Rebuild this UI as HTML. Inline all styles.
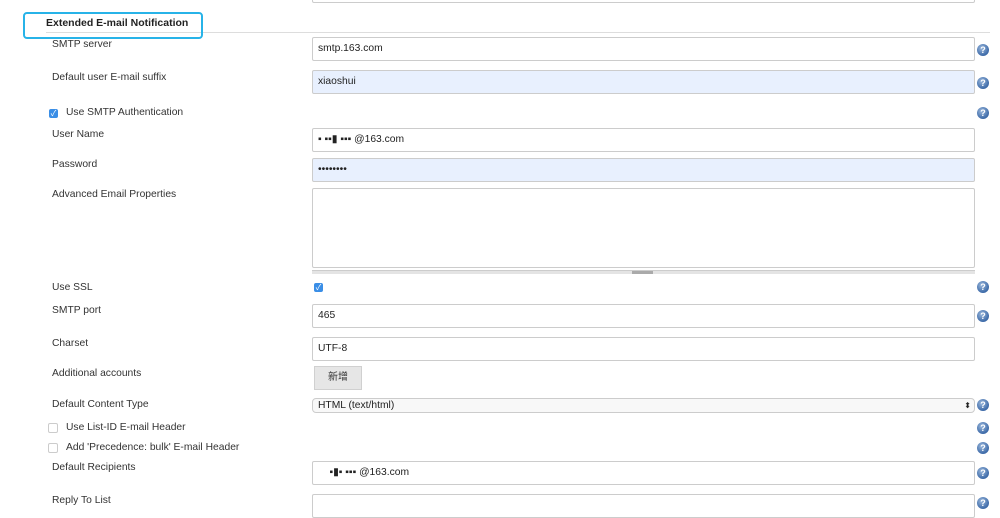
<!DOCTYPE html>
<html><head><meta charset="utf-8"><style>
body{margin:0;width:1000px;height:506px;overflow:hidden;background:#fff;font-family:"Liberation Sans","Noto Sans CJK SC",sans-serif;font-size:10.3px;color:#333;position:relative}
.a{position:absolute}
.l{position:absolute;left:52px;line-height:12px}
.in{position:absolute;left:312px;width:663px;border:1px solid #ccc;border-radius:2px;background:#fff;box-sizing:border-box;font-size:10.3px;color:#222;padding-left:5px}
.blue{background:#e8f0fe}
.h{position:absolute;left:977px;width:12px;height:12px;border-radius:50%;background:radial-gradient(circle at 40% 35%,#9bb8dc,#3d6aa8 70%);color:#fff;font-size:9px;font-weight:bold;text-align:center;line-height:12px}
.cb{position:absolute;width:9px;height:9px;border-radius:2px;background:#3a8ee6;color:#fff;font-size:8px;line-height:9px;text-align:center}
.cbe{position:absolute;width:8px;height:8px;border:1px solid #ccc;border-radius:2px;background:#fff}
</style></head><body>
<div class="in" style="top:-10px;height:13px"></div>
<div class="a" style="left:46px;top:32px;width:944px;height:1px;background:#ddd"></div>
<div class="a" style="left:23px;top:12px;width:176px;height:23px;border:2px solid #27b3e8;border-radius:4px"></div>
<div class="a" style="left:46px;top:17px;font-weight:bold;font-size:10.5px;color:#222">Extended E-mail Notification</div>

<div class="l" style="top:39px">SMTP server</div>
<div class="in" style="top:37px;height:24px;line-height:22px">smtp.163.com</div><div class="h" style="top:44px">?</div>

<div class="l" style="top:72px">Default user E-mail suffix</div>
<div class="in blue" style="top:70px;height:24px;line-height:22px">xiaoshui</div><div class="h" style="top:77px">?</div>

<div class="cb" style="left:49px;top:109px">✓</div>
<div class="a" style="left:66px;top:107px">Use SMTP Authentication</div><div class="h" style="top:107px">?</div>

<div class="l" style="top:129px">User Name</div>
<div class="in" style="top:128px;height:24px;line-height:22px">▪ ▪▪▮ ▪▪▪ @163.com</div>

<div class="l" style="top:159px">Password</div>
<div class="in blue" style="top:158px;height:24px;line-height:22px">••••••••</div>

<div class="l" style="top:189px">Advanced Email Properties</div>
<div class="in" style="top:188px;height:80px"></div>
<div class="a" style="left:312px;top:270px;width:663px;height:3px;background:#e4e4e4;border-top:1px solid #ccc"></div>
<div class="a" style="left:632px;top:271px;width:21px;height:3px;background:#aaa"></div>

<div class="l" style="top:282px">Use SSL</div>
<div class="cb" style="left:314px;top:283px">✓</div><div class="h" style="top:281px">?</div>

<div class="l" style="top:305px">SMTP port</div>
<div class="in" style="top:304px;height:24px;line-height:22px">465</div><div class="h" style="top:310px">?</div>

<div class="l" style="top:338px">Charset</div>
<div class="in" style="top:337px;height:24px;line-height:22px">UTF-8</div>

<div class="l" style="top:368px">Additional accounts</div>
<div class="a" style="left:314px;top:366px;width:48px;height:24px;background:#e6e6e6;border:1px solid #d0d0d0;box-sizing:border-box;text-align:center;line-height:22px;font-size:10px">新增</div>

<div class="l" style="top:399px">Default Content Type</div>
<div class="in" style="top:398px;height:15px;line-height:13px;border-radius:4px;background:#f8f8f8">HTML (text/html)<span style="position:absolute;right:3px;font-size:8px">⬍</span></div><div class="h" style="top:399px">?</div>

<div class="cbe" style="left:48px;top:423px"></div>
<div class="a" style="left:66px;top:422px">Use List-ID E-mail Header</div><div class="h" style="top:422px">?</div>
<div class="cbe" style="left:48px;top:443px"></div>
<div class="a" style="left:66px;top:442px">Add 'Precedence: bulk' E-mail Header</div><div class="h" style="top:442px">?</div>

<div class="l" style="top:462px">Default Recipients</div>
<div class="in" style="top:461px;height:24px;line-height:22px">&nbsp;&nbsp;&nbsp; ▪▮▪ ▪▪▪ @163.com</div><div class="h" style="top:467px">?</div>

<div class="l" style="top:495px">Reply To List</div>
<div class="in" style="top:494px;height:24px"></div><div class="h" style="top:497px">?</div>
</body></html>
